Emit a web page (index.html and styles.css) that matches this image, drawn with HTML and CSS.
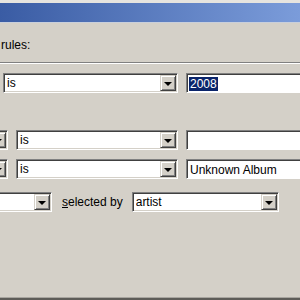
FILE: index.html
```html
<!DOCTYPE html>
<html>
<head>
<meta charset="utf-8">
<link rel="stylesheet" href="styles.css">
</head>
<body>
<div class="dialog">
  <div class="titlebar"></div>
  <div class="content">
    <div class="label-rules">rules:</div>
    <div class="separator"></div>
    <div class="row row1">
      <div class="combo w175"><span class="val">is</span><span class="btn"><span class="tri"></span></span></div>
      <div class="field"><span class="sel">2008</span></div>
    </div>
    <div class="row row2">
      <div class="combo off"><span class="val"></span><span class="btn"><span class="tri"></span></span></div>
      <div class="combo w162"><span class="val">is</span><span class="btn"><span class="tri"></span></span></div>
      <div class="field"></div>
    </div>
    <div class="row row3">
      <div class="combo off"><span class="val"></span><span class="btn"><span class="tri"></span></span></div>
      <div class="combo w162"><span class="val">is</span><span class="btn"><span class="tri"></span></span></div>
      <div class="field"><span class="txt">Unknown Album</span></div>
    </div>
    <div class="row row4">
      <div class="combo off4"><span class="val"></span><span class="btn"><span class="tri"></span></span></div>
      <span class="lbl"><u>s</u>elected by</span>
      <div class="combo w147"><span class="val">artist</span><span class="btn"><span class="tri"></span></span></div>
    </div>
  </div>
  <div class="bottom"></div>
</div>
</body>
</html>
```

FILE: styles.css
```css
html, body {
  margin: 0;
  padding: 0;
  width: 300px;
  height: 300px;
  overflow: hidden;
  background: #d4d0c8;
  font-family: "Liberation Sans", Arial, sans-serif;
  font-size: 12px;
  color: #000;
}
.dialog {
  width: 300px;
  height: 300px;
  display: flex;
  flex-direction: column;
  border-top: 3px solid #e6e4df;
  box-sizing: border-box;
  overflow: hidden;
}
.titlebar {
  height: 19px;
  background: linear-gradient(to right, #3a5ca4, #7b9cda);
  border-bottom: 1px solid #c9cfdb;
}
.content {
  flex: 1;
  display: flex;
  flex-direction: column;
  overflow: hidden;
}
.label-rules {
  margin-top: 15px;
  padding-left: 1px;
  height: 14px;
  line-height: 14px;
}
.separator {
  margin-top: 10px;
  height: 1px;
  background: #808080;
  border-bottom: 1px solid #fff;
}
.row {
  display: flex;
  align-items: center;
  height: 20px;
  gap: 8px;
}
.row1 { margin-top: 9px; padding-left: 3px; }
.row2 { margin-top: 37px; }
.row3 { margin-top: 9px; }
.row4 { margin-top: 13px; }
.combo {
  flex: none;
  box-sizing: border-box;
  height: 20px;
  display: flex;
  align-items: center;
  background: #fff;
  border: 1px solid;
  border-color: #808080 #fff #fff #808080;
  box-shadow: inset 1px 1px #404040, inset -1px -1px #d4d0c8;
  padding: 1px 1px 1px 3px;
}
.w175 { width: 175px; }
.w162 { width: 162px; }
.w147 { width: 147px; }
.off { width: 40px; margin-left: -32px; }
.off4 { width: 80px; margin-left: -28px; }
.val {
  flex: 1;
  line-height: 16px;
  white-space: nowrap;
  overflow: hidden;
}
.btn {
  flex: none;
  width: 16px;
  height: 16px;
  box-sizing: border-box;
  background: #d4d0c8;
  border: 1px solid;
  border-color: #d4d0c8 #404040 #404040 #d4d0c8;
  box-shadow: inset 1px 1px #fff, inset -1px -1px #808080;
  display: flex;
  align-items: center;
  justify-content: center;
}
.tri {
  width: 0;
  height: 0;
  border-left: 4px solid transparent;
  border-right: 4px solid transparent;
  border-top: 4px solid #000;
  margin-top: 1px;
}
.field {
  flex: none;
  width: 130px;
  box-sizing: border-box;
  height: 20px;
  background: #fff;
  border: 1px solid;
  border-color: #808080 #fff #fff #808080;
  box-shadow: inset 1px 1px #404040;
  padding: 2px 2px 1px 2px;
  display: flex;
  align-items: center;
  line-height: 14px;
}
.sel {
  background: #0a246a;
  color: #fff;
  padding: 0 1px;
}
.txt { padding-left: 1px; }
.lbl {
  flex: none;
  margin-left: 2px;
  margin-right: 1px;
  white-space: nowrap;
}
.bottom {
  height: 3px;
  border-top: 1px solid #a8a59f;
  background: #5e5c58;
  box-sizing: border-box;
}
```
